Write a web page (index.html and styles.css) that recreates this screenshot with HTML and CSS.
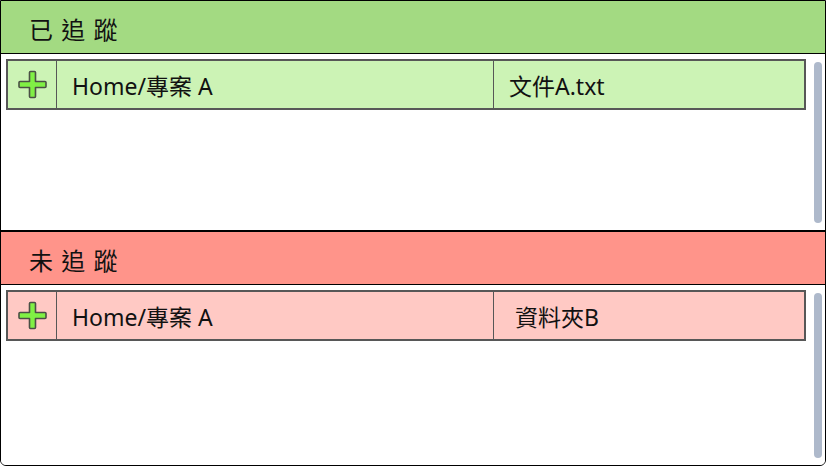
FILE: index.html
```html
<!DOCTYPE html>
<html lang="zh-Hant">
<head>
<meta charset="utf-8">
<title>追蹤狀態</title>
<link rel="stylesheet" href="styles.css">
</head>
<body>
<div class="frame">
  <section class="section tracked">
    <div class="header"><span class="title">已 追 蹤</span></div>
    <div class="content">
      <div class="list">
        <div class="row">
          <div class="cell-icon">
            <svg width="31" height="29" viewBox="0 0 31 29"><path d="M12.5 2.5 Q12.5 1.5 13.5 1.5 H17.5 Q18.5 1.5 18.5 2.5 V11.5 H28 Q29 11.5 29 12.5 V16.5 Q29 17.5 28 17.5 H18.5 V26.5 Q18.5 27.5 17.5 27.5 H13.5 Q12.5 27.5 12.5 26.5 V17.5 H3 Q2 17.5 2 16.5 V12.5 Q2 11.5 3 11.5 H12.5 Z" fill="#80f044" stroke="#4a4f45" stroke-width="1.6" stroke-linejoin="round"/></svg>
          </div>
          <div class="cell-path">Home/專案 A</div>
          <div class="cell-name">文件A.txt</div>
        </div>
      </div>
      <div class="scrollbar"><div class="thumb"></div></div>
    </div>
  </section>
  <section class="section untracked">
    <div class="header"><span class="title">未 追 蹤</span></div>
    <div class="content">
      <div class="list">
        <div class="row">
          <div class="cell-icon">
            <svg width="31" height="29" viewBox="0 0 31 29"><path d="M12.5 2.5 Q12.5 1.5 13.5 1.5 H17.5 Q18.5 1.5 18.5 2.5 V11.5 H28 Q29 11.5 29 12.5 V16.5 Q29 17.5 28 17.5 H18.5 V26.5 Q18.5 27.5 17.5 27.5 H13.5 Q12.5 27.5 12.5 26.5 V17.5 H3 Q2 17.5 2 16.5 V12.5 Q2 11.5 3 11.5 H12.5 Z" fill="#80f044" stroke="#4a4f45" stroke-width="1.6" stroke-linejoin="round"/></svg>
          </div>
          <div class="cell-path">Home/專案 A</div>
          <div class="cell-name cell-name-wide">資料夾B</div>
        </div>
      </div>
      <div class="scrollbar"><div class="thumb"></div></div>
    </div>
  </section>
</div>
</body>
</html>
```

FILE: styles.css
```css
* { box-sizing: border-box; }
html, body { margin: 0; padding: 0; background: #ffffff; }
body {
  font-family: "Noto Sans", "Noto Sans CJK TC", sans-serif;
  color: #111;
}
.frame {
  width: 826px;
  height: 466px;
  border: 1px solid #000;
  border-radius: 0 0 6px 6px;
  display: flex;
  flex-direction: column;
  overflow: hidden;
}
.section {
  height: 229px;
  display: flex;
  flex-direction: column;
}
.section.untracked {
  flex: 1;
  border-top: 2px solid #000;
}
.header {
  height: 53px;
  border-bottom: 1px solid #000;
  display: flex;
  align-items: center;
  padding-left: 28px;
  padding-top: 2px;
}
.tracked .header { background: #a3da82; }
.untracked .header { background: #ff948a; }
.title {
  font-size: 24px;
  letter-spacing: 1px;
}
.content {
  flex: 1;
  display: flex;
  padding: 5px 3px 6px 5px;
  gap: 8px;
  background: #fff;
}
.list { flex: 1; }
.row {
  height: 51px;
  border: 2px solid #575757;
  display: flex;
  align-items: stretch;
  font-size: 23px;
}
.tracked .row { background: #ccf3b5; }
.untracked .row { background: #ffc9c4; }
.cell-icon {
  width: 49px;
  border-right: 1px solid #575757;
  display: flex;
  align-items: center;
  justify-content: center;
}
.cell-path {
  width: 437px;
  border-right: 1px solid #575757;
  display: flex;
  align-items: center;
  padding-left: 15px;
}
.cell-name {
  flex: 1;
  display: flex;
  align-items: center;
  padding-left: 15px;
}
.cell-name-wide { padding-left: 21px; }
.scrollbar {
  width: 8px;
  padding: 3px 0 1px;
  display: flex;
}
.thumb {
  flex: 1;
  background: #aeb9cb;
  border-radius: 4px;
}
```
